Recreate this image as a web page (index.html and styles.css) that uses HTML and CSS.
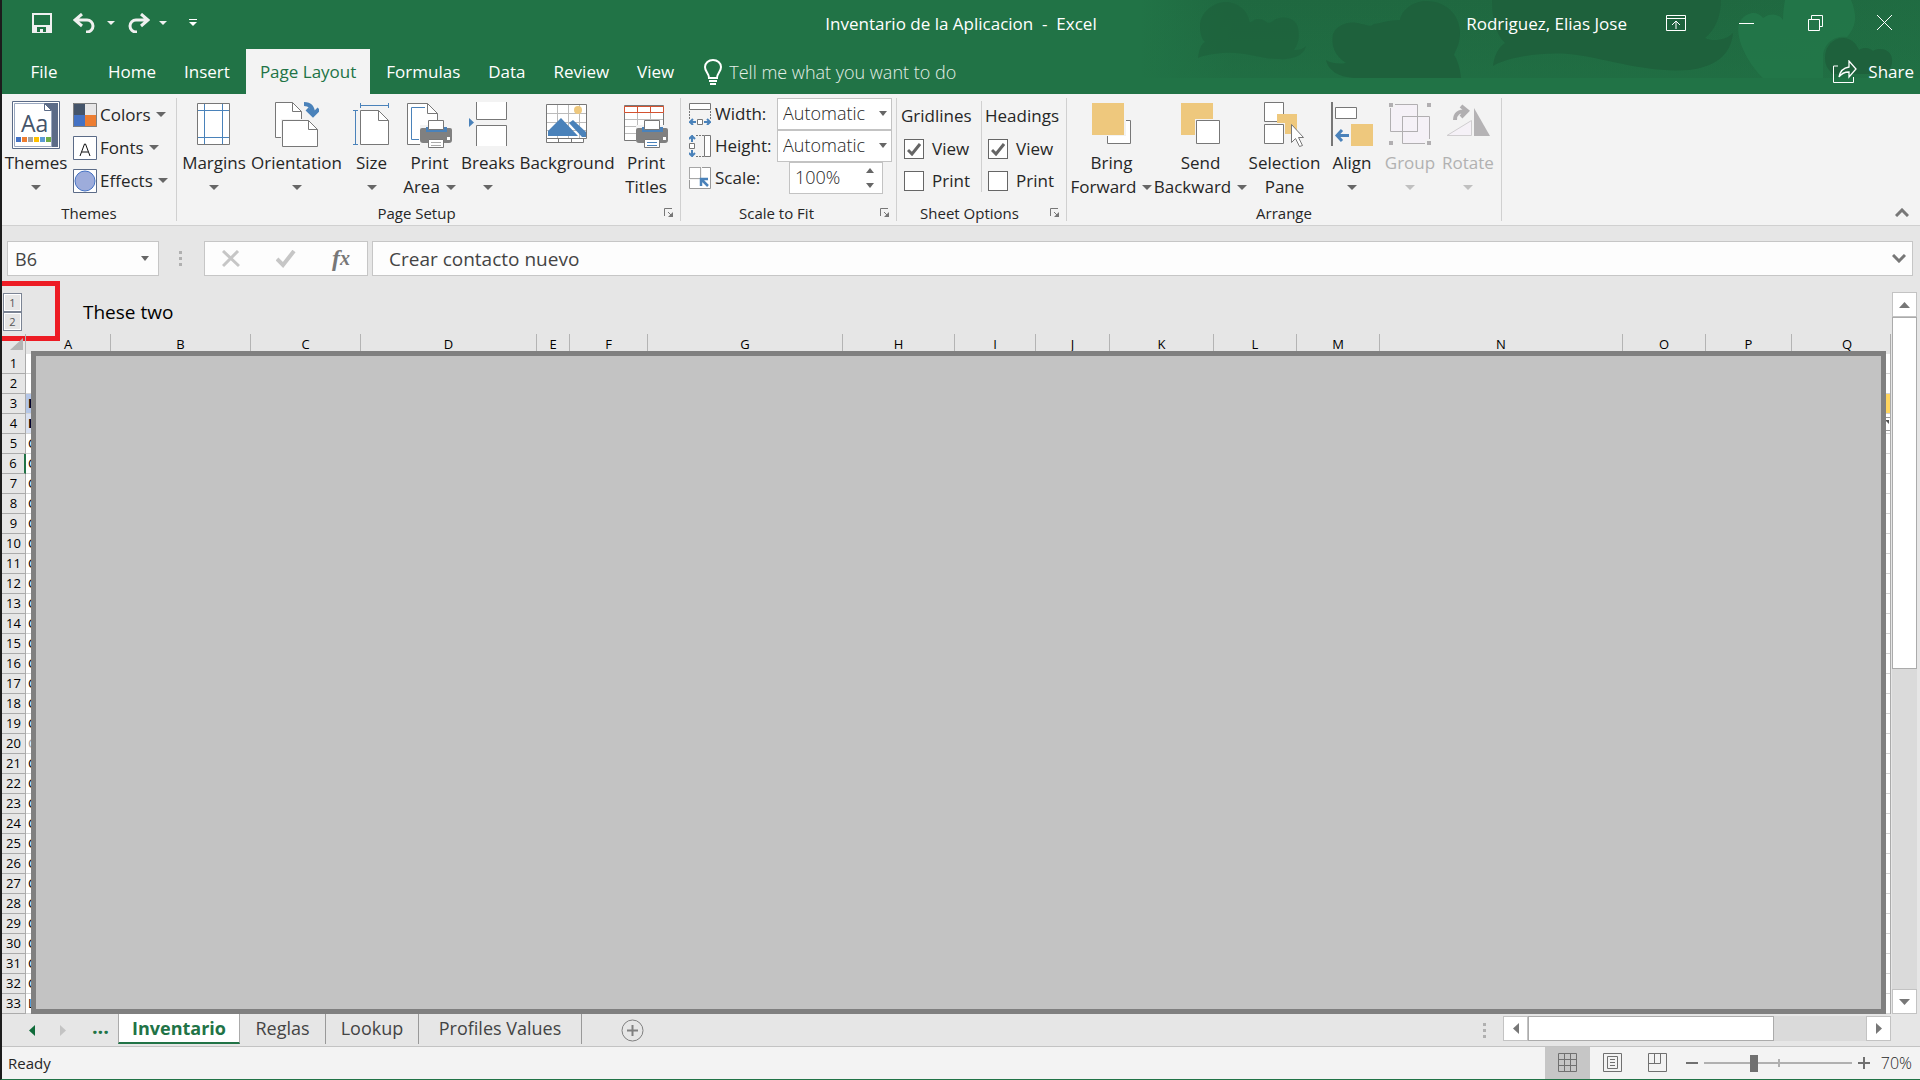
FILE: index.html
```html
<!DOCTYPE html>
<html lang="es">
<head>
<meta charset="UTF-8">
<title>Inventario de la Aplicacion - Excel</title>
<link rel="stylesheet" href="styles.css">
</head>
<body>

<header class="top">
  <svg class="art" width="780" height="78" viewBox="0 0 780 78" aria-hidden="true">
    <defs>
      <linearGradient id="haze" x1="0" x2="1" y1="0" y2="0">
        <stop offset="0" stop-color="#1e613c" stop-opacity="0"/>
        <stop offset=".12" stop-color="#1e613c" stop-opacity=".6"/>
        <stop offset=".75" stop-color="#1e613c" stop-opacity=".6"/>
        <stop offset="1" stop-color="#1e613c" stop-opacity=".4"/>
      </linearGradient>
      <linearGradient id="down" x1="0" x2="0" y1="0" y2="1">
        <stop offset="0" stop-color="#217346" stop-opacity="0"/>
        <stop offset="1" stop-color="#217346" stop-opacity=".5"/>
      </linearGradient>
    </defs>
    <rect width="780" height="78" fill="url(#haze)"/>
    <rect width="780" height="78" fill="url(#down)"/>
    <g fill="#1e613c">
      <path opacity=".7" d="M60 26C60 12 74 2 86 2c12 0 22 10 23 18 0 2 2 3 4 1 3-3 9-2 12 0 3 3 6 2 9-1 8-5 22-3 24 8 2 10 0 16-4 22 6 0 9-1 12-4-2 10-14 14-28 13-18 0-34-8-56-6-12 1-20 3-24 5 1-8 3-14 7-16-4-4-5-10-5-16z"/>
      <path d="M193 34c4-10 18-14 28-10 6 0 8 4 13 0 8-1 14-4 26-4C262 8 276 1 286 1c22 0 34 16 34 32 0 12-5 18-6 22 3 4 6 12 7 23H214c-16-1-26-8-28-18 6 4 14 4 20 3-12-8-15-18-13-29z"/>
      <path d="M352 0h229c0 16-6 30-16 38 8 4 22 2 28-5-2 22-18 34-44 37-46 3-82-12-120-16-34-2-62 4-76 12 1-10 5-18 12-23-10-10-13-26-13-43z"/>
    </g>
    <path fill="#23784a" opacity=".8" d="M645 0h66c6 14 6 26-4 37-14-2-24 8-24 20v21h-60c-20-20-30-48-22-58 8-10 18-8 22-2 8-6 16-4 20 2 0-8 1-14 2-20z"/>
    <path fill="#1e613c" d="M685 58c0-12 8-20 18-20 8 0 13 5 16 12 6-4 12-1 14 1 6-4 18-2 19 8 1 8-4 13-8 15h-52c-2-4-7-6-7-16z"/>
  </svg>

  <div class="titlebar">
    <div class="quick">
      <button class="ico" aria-label="Save"><svg width="20" height="20"><path d="M1 1h18v18H1z" fill="none" stroke="#f0f0f0" stroke-width="2"/><path d="M1 12h18v7H1z" fill="#f0f0f0"/><path d="M5 14h9v5h-3v-3H8v3H5z" fill="#217346"/></svg></button>
      <button class="ico undo" aria-label="Undo"><svg width="23" height="20"><path d="M9 1 2 7l7 6M3 7h11a6 6 0 0 1 0 12h-1" fill="none" stroke="#f0f0f0" stroke-width="3"/></svg></button>
      <i class="arr light"></i>
      <button class="ico redo" aria-label="Redo"><svg width="23" height="20"><path d="m14 1 7 6-7 6M20 7H9a6 6 0 0 0 0 12h1" fill="none" stroke="#f0f0f0" stroke-width="3"/></svg></button>
      <i class="arr light"></i>
      <button class="ico custom" aria-label="Customize"><svg width="8" height="8"><path d="M0 .5h8" stroke="#fff"/><path d="M0 3h8L4 7z" fill="#fff"/></svg></button>
    </div>
    <div class="doc">Inventario de la Aplicacion&nbsp; -&nbsp; Excel</div>
    <div class="win">
      <span>Rodriguez, Elias Jose</span>
      <button class="ico" aria-label="Ribbon Display Options"><svg width="20" height="16"><path d="M.5.5h19v15H.5zM0 3.500h20M10 14V6M6 10l4-4 4 4" fill="none" stroke="#fff"/></svg></button>
      <button class="ico" aria-label="Minimize"><svg width="16" height="16"><path d="M0 8.500h15" stroke="#fff"/></svg></button>
      <button class="ico" aria-label="Restore"><svg width="16" height="16"><path d="M.5 4.500h11v11H.5zM3.500 4V.5h11v11H12" fill="none" stroke="#fff"/></svg></button>
      <button class="ico" aria-label="Close"><svg width="16" height="16"><path d="m0 0 15 15M15 0 0 15" stroke="#fff"/></svg></button>
    </div>
  </div>

  <nav class="tabs">
    <button class="file">File</button>
    <button>Home</button>
    <button>Insert</button>
    <button class="on">Page Layout</button>
    <button>Formulas</button>
    <button>Data</button>
    <button>Review</button>
    <button>View</button>
    <label class="tell">
      <svg width="18" height="26"><path d="M5 19c0-5-4-6-4-11a8 7 0 0 1 16 0c0 5-4 6-4 11zM5 22h8M6 25h6" fill="none" stroke="#fff" stroke-width="2"/></svg>
      <input type="text" placeholder="Tell me what you want to do" aria-label="Tell me what you want to do">
    </label>
    <button class="share"><svg width="25" height="24"><path d="M5 6H.5v16.500h20V17" fill="none" stroke="#fff"/><path d="M6 17c1-6 4-9 10-10V1l7 8-7 8v-5c-5 0-8 2-10 5z" fill="none" stroke="#fff" stroke-width="1.300"/></svg>Share</button>
  </nav>
</header>

<section class="ribbon">

  <div class="group themes">
    <div class="tools">
      <button class="big"><span class="pic"><svg width="48" height="48"><path d="M.5.5h47v47H.5z" fill="#fff" stroke="#5b6b87"/><path d="M32 2h14v44H3v-1h37V10z" fill="#5b6b87"/><path d="M2.500 45.500v-43h30l7 7v36z" fill="#fff" stroke="#9aa8bf"/><path d="M32.500 2.500v7h7z" fill="#fff" stroke="#5b6b87"/><text x="9" y="31" class="aa">Aa</text><path d="M4 36h5v5H4z" fill="#4472c4"/><path d="M10 36h5v5h-5z" fill="#ed7d31"/><path d="M16 36h5v5h-5z" fill="#a5a5a5"/><path d="M22 36h5v5h-5z" fill="#ffc000"/><path d="M28 36h5v5h-5z" fill="#5b9bd5"/><path d="M34 36h5v5h-5z" fill="#70ad47"/></svg></span>Themes<span class="sub"><i class="arr"></i></span></button>
      <div class="stack">
        <button><svg width="24" height="24"><path d="M0 0h12v12H0z" fill="#44546a"/><path d="M12 0h12v12H12z" fill="#e7e6e6"/><path d="M0 12h12v12H0z" fill="#4472c4"/><path d="M12 12h12v12H12z" fill="#ed7d31"/><path d="M.5.5h23v23H.5z" fill="none" stroke="#808080"/></svg>Colors<i class="arr"></i></button>
        <button><svg width="24" height="24"><path d="M.5.5h23v23H.5z" fill="#fff" stroke="#5b6b87"/><path d="m7 20 4.500-12h1L17 20M9 16h6" fill="none" stroke="#111"/></svg>Fonts<i class="arr"></i></button>
        <button><svg width="24" height="24"><path d="M.5.5h23v23H.5z" fill="#fff" stroke="#5b6b87"/><circle cx="12" cy="12" r="10" fill="#9dacdb" stroke="#4472c4"/></svg>Effects<i class="arr"></i></button>
      </div>
    </div>
    <div class="cap"><span>Themes</span></div>
  </div>

  <div class="group setup">
    <div class="tools">
      <button class="big"><span class="pic"><svg width="34" height="44"><path d="M.5 1.500h32v41H.5z" fill="#fff" stroke="#777"/><path d="M7.500 2v40M25.500 2v40M1 8.500h31M1 35.500h31" stroke="#4a82ba" fill="none"/></svg></span>Margins<span class="sub"><i class="arr"></i></span></button>
      <button class="big"><span class="pic"><svg width="44" height="46"><path d="M.5.5h17l9 9v26H.5z" fill="#fff" stroke="#777"/><path d="M17.500.5v9h9" fill="none" stroke="#777"/><path d="M6 17h29l9 9v20H6z" fill="#f3f3f3"/><path d="M7.500 18.500h26l9 9v17h-35z" fill="#fff" stroke="#777"/><path d="M33.500 18.500v9h9" fill="none" stroke="#777"/><path d="M29 2c6 0 9 3 9 10M32 7l6 6 6-6" fill="none" stroke="#4a82ba" stroke-width="4"/></svg></span>Orientation<span class="sub"><i class="arr"></i></span></button>
      <button class="big"><span class="pic"><svg width="37" height="44"><path d="M7.500 8.500h18l10 10v24h-28z" fill="#fff" stroke="#777"/><path d="M25.500 8.500v10h10" fill="none" stroke="#777"/><path d="M7.500 1v5M35.500 1v5M8 3.500h27M0 8.500h5M0 42.500h5M2.500 9v33" fill="none" stroke="#4a82ba"/></svg></span>Size<span class="sub"><i class="arr"></i></span></button>
      <button class="big"><span class="pic"><svg width="46" height="46"><path d="M.5 1.500h20l10 10v31H.5z" fill="#fff" stroke="#777"/><path d="M20.500 1.500v10h10" fill="none" stroke="#777"/><path d="M18 5.500H4.500v32H12" fill="none" stroke="#4a82ba"/><g transform="translate(13 18)"><path d="M0 5h32v20H0z" fill="#f3f3f3"/><path d="M2 8h28q2 0 2 2v10q0 3-3 3H3q-3 0-3-3V10q0-2 2-2z" fill="#808080"/><path d="M6 7h21v5H6z" fill="#4a82ba"/><path d="M8.500.5h15v9h-15zM8.500 19.500h15v8h-15z" fill="#fff" stroke="#777"/><path d="M11 22.500h10M11 25.500h10" stroke="#aaa"/><path d="M27 17h3v3h-3z" fill="#fff"/></g></svg></span>Print<span class="sub">Area <i class="arr"></i></span></button>
      <button class="big"><span class="pic"><svg width="39" height="44"><path d="M7.500 0v17.500h30V0M7.500 44V23.500h30V44" fill="#fff" stroke="#777"/><path d="M0 16v9l5-4.500z" fill="#4a82ba"/></svg></span>Breaks<span class="sub"><i class="arr"></i></span></button>
      <button class="big"><span class="pic"><svg width="42" height="42"><path d="M.5 36.500h37v4H.5zM12.500 36v5M25.500 36v5" fill="#fff" stroke="#777"/><path d="M.5 2.500h40v34H.5z" fill="#fff" stroke="#777"/><path d="M11.500 3v33M22.500 3v33M33.500 3v33M1 11.500h39M1 20.500h39M1 28.500h39" stroke="#bbb"/><circle cx="32" cy="8" r="4" fill="#eec87d"/><path d="M2 29 15 16l17 18H2z" fill="#4a82ba"/><path d="m23 21 4-3 13 12v5h-4z" fill="#4a82ba"/></svg></span>Background</button>
      <button class="big"><span class="pic"><svg width="46" height="46"><path d="M1.500 3.500h39v35h-39z" fill="#fff" stroke="#777"/><path d="M2 17.500h38M2 24.500h38M2 31.500h38M14.500 11v27M27.500 11v27" stroke="#bbb"/><path d="M1.500 4.500h39v6h-39zM14.500 4v7M27.500 4v7" fill="#fff" stroke="#d35230"/><g transform="translate(13 18)"><path d="M0 5h32v20H0z" fill="#f3f3f3"/><path d="M2 8h28q2 0 2 2v10q0 3-3 3H3q-3 0-3-3V10q0-2 2-2z" fill="#808080"/><path d="M6 7h21v5H6z" fill="#4a82ba"/><path d="M8.500.5h15v9h-15zM8.500 19.500h15v8h-15z" fill="#fff" stroke="#777"/><path d="M11 22.500h10M11 25.500h10" stroke="#4a82ba"/><path d="M27 17h3v3h-3z" fill="#fff"/></g></svg></span>Print<span class="sub">Titles</span></button>
    </div>
    <div class="cap"><span>Page Setup</span><button class="launch" aria-label="Page Setup dialog"><svg width="10" height="10"><path d="M.5 8V.5H8M4 4l4 4" fill="none" stroke="#777"/><path d="M9 4v5H4z" fill="#777"/></svg></button></div>
  </div>

  <div class="group scale">
    <div class="rows">
      <div class="line"><svg width="22" height="22"><path d="M.5.5h21v6H.5z" fill="#fff" stroke="#777"/><path d="M.5 8v9M21.500 8v9" stroke="#777" stroke-dasharray="2 1"/><path d="M8.500 16.500h5v5h-5z" fill="#fff" stroke="#777"/><path d="M7 19H1l3-3M1 19l3 3M15 19h6l-3-3M21 19l-3 3" fill="none" stroke="#4a82ba" stroke-width="2"/></svg><label for="w">Width:</label><select id="w"><option>Automatic</option></select></div>
      <div class="line"><svg width="22" height="22"><path d="M15.500.5h6v21h-6z" fill="#fff" stroke="#777"/><path d="M7 .5h8M7 21.500h8" stroke="#777" stroke-dasharray="2 1"/><path d="M.5 8.500h5v5h-5z" fill="#fff" stroke="#777"/><path d="M3 7V1L0 4M3 1l3 3M3 15v6l-3-3M3 21l3-3" fill="none" stroke="#4a82ba" stroke-width="2"/></svg><label for="h">Height:</label><select id="h"><option>Automatic</option></select></div>
      <div class="line"><svg width="22" height="22"><path d="M.5.5h21v21H.5z" fill="#fff" stroke="#999"/><path d="M0 0h13v13H0z" fill="#f3f3f3"/><path d="M.5.5h11v11H.5z" fill="#fff" stroke="#555" stroke-dasharray="1 1"/><path d="m19 19-6-6M12 19v-7h7" fill="none" stroke="#4a82ba" stroke-width="2.500"/></svg><label for="s">Scale:</label><span class="spin"><input id="s" type="text" value="100%"><span class="updown"><button aria-label="Increase"><i class="arr up"></i></button><button aria-label="Decrease"><i class="arr"></i></button></span></span></div>
    </div>
    <div class="cap"><span>Scale to Fit</span><button class="launch" aria-label="Scale dialog"><svg width="10" height="10"><path d="M.5 8V.5H8M4 4l4 4" fill="none" stroke="#777"/><path d="M9 4v5H4z" fill="#777"/></svg></button></div>
  </div>

  <div class="group options">
    <div class="checks">
      <div class="col"><span>Gridlines</span><label><input type="checkbox" checked>View</label><label><input type="checkbox">Print</label></div>
      <div class="col"><span>Headings</span><label><input type="checkbox" checked>View</label><label><input type="checkbox">Print</label></div>
    </div>
    <div class="cap"><span>Sheet Options</span><button class="launch" aria-label="Sheet dialog"><svg width="10" height="10"><path d="M.5 8V.5H8M4 4l4 4" fill="none" stroke="#777"/><path d="M9 4v5H4z" fill="#777"/></svg></button></div>
  </div>

  <div class="group arrange">
    <div class="tools">
      <button class="big"><span class="pic"><svg width="40" height="44"><path d="M15.500 18.500h23v23h-23z" fill="#fff" stroke="#777"/><path d="M0 0h34v34H0z" fill="#f3f3f3"/><path d="M0 1h32v32H0z" fill="#eec87d"/></svg></span>Bring<span class="sub">Forward <i class="arr"></i></span></button>
      <button class="big"><span class="pic"><svg width="40" height="44"><path d="M0 1h32v32H0z" fill="#eec87d"/><path d="M14 17h26v26H14z" fill="#f3f3f3"/><path d="M15.500 18.500h23v23h-23z" fill="#fff" stroke="#777"/></svg></span>Send<span class="sub">Backward <i class="arr"></i></span></button>
      <button class="big"><span class="pic"><svg width="42" height="46"><path d="M.5.5h19v19H.5zM.5 22.500h19v19H.5z" fill="#fff" stroke="#777"/><path d="M13 12h20v20H21V21h-8z" fill="#eec87d"/><path d="M27.500 22.500v18l4-4 4 8 3-1-4-8h5z" fill="#fff" stroke="#777"/></svg></span>Selection<span class="sub">Pane</span></button>
      <button class="big"><span class="pic"><svg width="42" height="44"><path d="M1 0v44" stroke="#777" stroke-width="2"/><path d="M4.500 5.500h21v11h-21z" fill="#fff" stroke="#777"/><path d="M20 22h22v22H20z" fill="#eec87d"/><path d="M18 33.500H6M11 28l-5 5.500 5 5.500" fill="none" stroke="#4a82ba" stroke-width="3"/></svg></span>Align<span class="sub"><i class="arr"></i></span></button>
      <button class="big" disabled><span class="pic"><svg width="42" height="44"><path d="M1.500 2.500h27v27h-27zM13.500 14.500h27v27h-27z" fill="#f5f1f7" stroke="#b1afb1"/><path d="M13.500 29.500v-15h15v15z" fill="none" stroke="#b1afb1"/><path d="M0 0h6v6H0zM36 0h6v6h-6zM0 37h6v6H0zM36 37h6v6h-6z" fill="#f3f3f3"/><path d="M0 1h4v4H0zM38 1h4v4h-4zM0 39h4v4H0zM38 39h4v4h-4z" fill="#b1afb1"/></svg></span>Group<span class="sub"><i class="arr"></i></span></button>
      <button class="big" disabled><span class="pic"><svg width="44" height="44"><path d="M1 33.500h24.500v-15z" fill="#f5f1f7" stroke="#d0ced0"/><path d="M28 6v28h16z" fill="#b5b3b5"/><path d="M9 18c0-7 4-9 12-9M15 4l6 5-6 6" fill="none" stroke="#b1afb1" stroke-width="4"/></svg></span>Rotate<span class="sub"><i class="arr"></i></span></button>
    </div>
    <div class="cap"><span>Arrange</span></div>
  </div>

  <button class="ico collapse" aria-label="Collapse the Ribbon"><svg width="14" height="9"><path d="m1 8 6-6 6 6" fill="none" stroke="#777" stroke-width="3"/></svg></button>
</section>

<section class="formula">
  <div class="box name"><input type="text" value="B6" aria-label="Name Box"><i class="arr"></i></div>
  <div class="dots"><i></i><i></i><i></i></div>
  <div class="box fx">
    <button class="ico" aria-label="Cancel"><svg width="18" height="18"><path d="m1 1 16 15M16 1 1 16" stroke="#c6c6c6" stroke-width="3"/></svg></button>
    <button class="ico" aria-label="Enter"><svg width="20" height="18"><path d="m1 9 6 6L18 1" fill="none" stroke="#c6c6c6" stroke-width="4"/></svg></button>
    <button class="ico fn" aria-label="Insert Function">f<small>x</small></button>
  </div>
  <div class="box text"><input type="text" value="Crear contacto nuevo" aria-label="Formula Bar"><svg width="14" height="9"><path d="m1 1 6 6 6-6" fill="none" stroke="#777" stroke-width="3"/></svg></div>
</section>

<main class="work">
  <div class="mark"></div>
  <div class="sheet">
    <div class="outline">
      <div class="levels"><button>1</button><button>2</button></div>
      <span class="note">These two</span>
    </div>
    <div class="grid">
      <table>
        <colgroup><col class="c0"><col class="cA"><col class="cB"><col class="cC"><col class="cD"><col class="cE"><col class="cF"><col class="cG"><col class="cH"><col class="cI"><col class="cJ"><col class="cK"><col class="cL"><col class="cM"><col class="cN"><col class="cO"><col class="cP"><col class="cQ"></colgroup>
        <thead>
          <tr><th class="corner"><svg width="13" height="12"><path d="M13 0v12H0z" fill="#b4b4b4"/></svg></th><th>A</th><th>B</th><th>C</th><th>D</th><th>E</th><th>F</th><th>G</th><th>H</th><th>I</th><th>J</th><th>K</th><th>L</th><th>M</th><th>N</th><th>O</th><th>P</th><th>Q</th></tr>
        </thead>
        <tbody>
          <tr><th>1</th><td></td><td colspan="16"></td></tr>
          <tr><th>2</th><td></td><td colspan="16"></td></tr>
          <tr class="head1"><th>3</th><td>I</td><td colspan="16"></td></tr>
          <tr class="head2"><th>4</th><td>I</td><td colspan="16"><svg width="5" height="14"><path d="M0 .5h5M0 13.500h5" stroke="#999"/><path d="M0 3h4v4z" fill="#555"/></svg></td></tr>
          <tr><th>5</th><td>C</td><td colspan="16"></td></tr>
          <tr class="cur"><th>6</th><td>C</td><td colspan="16"></td></tr>
          <tr><th>7</th><td>C</td><td colspan="16"></td></tr>
          <tr><th>8</th><td>C</td><td colspan="16"></td></tr>
          <tr><th>9</th><td>C</td><td colspan="16"></td></tr>
          <tr><th>10</th><td>C</td><td colspan="16"></td></tr>
          <tr><th>11</th><td>C</td><td colspan="16"></td></tr>
          <tr><th>12</th><td>C</td><td colspan="16"></td></tr>
          <tr><th>13</th><td>C</td><td colspan="16"></td></tr>
          <tr><th>14</th><td>C</td><td colspan="16"></td></tr>
          <tr><th>15</th><td>C</td><td colspan="16"></td></tr>
          <tr><th>16</th><td>C</td><td colspan="16"></td></tr>
          <tr><th>17</th><td>C</td><td colspan="16"></td></tr>
          <tr><th>18</th><td>C</td><td colspan="16"></td></tr>
          <tr><th>19</th><td>C</td><td colspan="16"></td></tr>
          <tr class="dim"><th>20</th><td>C</td><td colspan="16"></td></tr>
          <tr><th>21</th><td>C</td><td colspan="16"></td></tr>
          <tr><th>22</th><td>C</td><td colspan="16"></td></tr>
          <tr><th>23</th><td>C</td><td colspan="16"></td></tr>
          <tr><th>24</th><td>C</td><td colspan="16"></td></tr>
          <tr><th>25</th><td>C</td><td colspan="16"></td></tr>
          <tr><th>26</th><td>C</td><td colspan="16"></td></tr>
          <tr><th>27</th><td>C</td><td colspan="16"></td></tr>
          <tr><th>28</th><td>C</td><td colspan="16"></td></tr>
          <tr><th>29</th><td>C</td><td colspan="16"></td></tr>
          <tr><th>30</th><td>C</td><td colspan="16"></td></tr>
          <tr><th>31</th><td>C</td><td colspan="16"></td></tr>
          <tr><th>32</th><td>C</td><td colspan="16"></td></tr>
          <tr><th>33</th><td>L</td><td colspan="16"></td></tr>
        </tbody>
      </table>
      <div class="cover"></div>
    </div>
  </div>
  <div class="vscroll">
    <button class="sb" aria-label="Scroll up"><svg width="11" height="6"><path d="M5.500 0 11 6H0z" fill="#777"/></svg></button>
    <div class="thumb"></div>
    <div class="track"></div>
    <button class="sb" aria-label="Scroll down"><svg width="11" height="6"><path d="M0 0h11L5.500 6z" fill="#777"/></svg></button>
  </div>
</main>

<section class="sheets">
  <div class="move">
    <button class="ico" aria-label="Previous sheet"><svg width="6" height="11"><path d="M6 0v11L0 5.500z" fill="#0f6b3a"/></svg></button>
    <button class="ico" aria-label="Next sheet"><svg width="6" height="11"><path d="M0 0v11l6-5.500z" fill="#c3c3c3"/></svg></button>
    <button class="ico more">...</button>
  </div>
  <button class="tab on">Inventario</button>
  <button class="tab t1">Reglas</button>
  <button class="tab t2">Lookup</button>
  <button class="tab t3">Profiles Values</button>
  <button class="ico plus" aria-label="New sheet"><svg width="23" height="23"><circle cx="11.500" cy="11.500" r="10.500" fill="none" stroke="#808080"/><path d="M6 11.500h11M11.500 6v11" stroke="#808080" stroke-width="2"/></svg></button>
  <div class="dots"><i></i><i></i><i></i></div>
  <div class="hscroll">
    <button class="sb" aria-label="Scroll left"><svg width="6" height="11"><path d="M6 0v11L0 5.500z" fill="#777"/></svg></button>
    <div class="thumb"></div>
    <div class="track"></div>
    <button class="sb" aria-label="Scroll right"><svg width="6" height="11"><path d="M0 0v11l6-5.500z" fill="#777"/></svg></button>
  </div>
</section>

<footer class="status">
  <span class="ready">Ready</span>
  <button class="mode on" aria-label="Normal"><svg width="20" height="20"><path d="M.5.5h18v18H.5zM6.500 1v17M12.500 1v17M1 6.500h17M1 12.500h17" fill="none" stroke="#707070"/></svg></button>
  <button class="mode" aria-label="Page Layout"><svg width="20" height="20"><path d="M.5.5h18v18H.5zM4.500 3.500h10v12h-10zM7 6.500h5M7 9.500h5M7 12.500h5" fill="none" stroke="#707070"/></svg></button>
  <button class="mode" aria-label="Page Break Preview"><svg width="20" height="20"><path d="M.5.5h18v18H.5zM.5 10.500h12V1M6.500 1v9" fill="none" stroke="#707070"/></svg></button>
  <button class="ico" aria-label="Zoom out"><svg width="12" height="12"><path d="M0 6h12" stroke="#707070" stroke-width="2"/></svg></button>
  <input class="zoom" type="range" min="0" max="100" value="33" aria-label="Zoom">
  <button class="ico" aria-label="Zoom in"><svg width="12" height="12"><path d="M0 6h12M6 0v12" stroke="#707070" stroke-width="2"/></svg></button>
  <span class="pct">70%</span>
</footer>

</body>
</html>
```
FILE: styles.css
```css
*
{
  box-sizing : border-box;
}

body
{
  margin : 0;
  min-height : 100vh;
  display : flex;
  flex-direction : column;
  font-family : "Open Sans", "Noto Sans", sans-serif;
  font-size : 17px;
  color : #262626;
  background : #e6e6e6;
  border-left : 2px solid #1c1c1c;
  border-bottom : 1px solid #217346;
  overflow-x : hidden;
}

button, input, select
{
  font : inherit;
  color : inherit;
  background : none;
  border : 0;
  border-radius : 0;
  margin : 0;
  padding : 0;
}

svg
{
  display : block;
  flex : none;
}

.ico
{
  display : flex;
  align-items : center;
  justify-content : center;
}

/* small drop-down triangle */
.arr
{
  display : inline-block;
  flex : none;
  border : 5px solid transparent;
  border-top-color : #666;
  border-bottom : 0;
}
.arr.up
{
  border-top : 0;
  border-bottom : 5px solid #666;
}
.arr.light
{
  border-width : 4px;
  border-bottom : 0;
  border-top-color : #f0f0f0;
}

/* title bar and tabs */
.top
{
  position : relative;
  background : #217346;
  color : #fff;
}
.art
{
  position : absolute;
  top : 0;
  right : 0;
}
.titlebar
{
  position : relative;
  display : grid;
  grid-template-columns : 1fr auto 1fr;
  align-items : center;
  height : 49px;
  padding-bottom : 3px;
}
.quick
{
  display : flex;
  align-items : center;
  padding-left : 30px;
}
.undo
{
  margin : 0 11px 0 21px;
}
.redo
{
  margin : 0 9px 0 12px;
}
.custom
{
  margin-left : 22px;
}
.win
{
  display : flex;
  align-items : center;
  justify-content : flex-end;
  gap : 53px;
  padding-right : 27px;
}
.win span
{
  margin-right : -14px;
}

.tabs
{
  position : relative;
  display : flex;
  height : 45px;
}
.tabs button
{
  padding : 0 14px;
}
.tabs .file
{
  width : 84px;
  margin-right : 8px;
}
.tabs .on
{
  margin : 0 2px;
  background : #f3f3f3;
  color : #217346;
}
.tell
{
  display : flex;
  align-items : center;
  gap : 7px;
  margin-left : 16px;
}
.tell input
{
  width : 280px;
  font-size : 18px;
  font-weight : 300;
}
.tell input::placeholder
{
  color : #e4efe8;
  opacity : 1;
}
.tabs .share
{
  display : flex;
  align-items : center;
  gap : 10px;
  margin-left : auto;
  padding : 0 6px;
}

/* ribbon */
.ribbon
{
  display : flex;
  height : 132px;
  padding-top : 4px;
  background : #f3f3f3;
  border-bottom : 1px solid #d0d0d0;
}
.group
{
  display : flex;
  flex-direction : column;
  height : 123px;
  border-right : 1px solid #d0d0d0;
}
.themes
{
  width : 175px;
}
.setup
{
  width : 504px;
}
.scale
{
  width : 216px;
}
.options
{
  width : 170px;
}
.arrange
{
  width : 435px;
}
.tools
{
  display : flex;
  flex : 1;
  align-items : flex-start;
}
.big
{
  display : flex;
  flex-direction : column;
  align-items : center;
  line-height : 24px;
}
.big:disabled
{
  color : #b1b1b1;
}
.big:disabled .arr
{
  border-top-color : #c0c0c0;
}
.pic
{
  height : 53px;
  padding-top : 3px;
}
.setup .pic, .arrange .pic
{
  padding-top : 4px;
}
.sub
{
  display : flex;
  align-items : center;
  gap : 6px;
  height : 24px;
}
.aa
{
  font-size : 23px;
  fill : #44546a;
}
.themes .big
{
  width : 68px;
}
.setup .big:nth-child(1)
{
  width : 74px;
}
.setup .big:nth-child(2)
{
  width : 91px;
}
.setup .big:nth-child(3)
{
  width : 59px;
}
.setup .big:nth-child(4)
{
  width : 57px;
}
.setup .big:nth-child(5)
{
  width : 60px;
}
.setup .big:nth-child(6)
{
  width : 98px;
}
.setup .big:nth-child(7)
{
  width : 60px;
}
.arrange .big:nth-child(1)
{
  width : 89px;
}
.arrange .big:nth-child(2)
{
  width : 89px;
}
.arrange .big:nth-child(3)
{
  width : 79px;
}
.arrange .big:nth-child(4)
{
  width : 56px;
}
.arrange .big:nth-child(5)
{
  width : 60px;
}
.arrange .big:nth-child(6)
{
  width : 56px;
}
.stack
{
  padding-left : 3px;
}
.stack button
{
  display : flex;
  align-items : center;
  gap : 3px;
  height : 33px;
}
.stack .arr
{
  margin-left : 2px;
}
.cap
{
  display : flex;
  align-items : center;
  height : 17px;
  font-size : 15px;
}
.cap span
{
  flex : 1;
  text-align : center;
}
.launch
{
  width : 24px;
  padding-left : 8px;
}

.rows
{
  flex : 1;
  padding-left : 8px;
}
.line
{
  display : flex;
  align-items : center;
  height : 32px;
}
.line label
{
  width : 66px;
  padding : 0 0 2px 4px;
}
.line select
{
  appearance : none;
  width : 115px;
  height : 32px;
  padding : 0 0 2px 5px;
  border : 1px solid #c3c3c3;
  background : #fff url("data:image/svg+xml,%3Csvg xmlns='http://www.w3.org/2000/svg' width='8' height='5'%3E%3Cpath d='M0 0h8L4 5z' fill='%23666'/%3E%3C/svg%3E") no-repeat right 4px top 12px;
  font-size : 18px;
  font-weight : 300;
}
.spin
{
  display : flex;
  width : 94px;
  height : 32px;
  margin-left : 12px;
  background : #fff;
  border : 1px solid #c3c3c3;
}
.spin input
{
  width : 69px;
  padding : 0 0 2px 5px;
  font-size : 18px;
  font-weight : 300;
}
.updown
{
  display : flex;
  flex-direction : column;
  justify-content : space-around;
}
.updown button
{
  display : flex;
  width : 22px;
  justify-content : center;
}
.updown .arr
{
  border-left-width : 4px;
  border-right-width : 4px;
}

.checks
{
  display : flex;
  flex : 1;
  padding-top : 3px;
}
.col
{
  width : 84px;
  height : 91px;
  padding-left : 4px;
  line-height : 30px;
}
.col span
{
  display : block;
  height : 32px;
}
.col + .col
{
  padding-left : 3px;
  border-left : 1px solid #d0d0d0;
}
.col label
{
  display : flex;
  align-items : center;
  gap : 8px;
  height : 32px;
  padding-left : 3px;
}
.col input
{
  appearance : none;
  width : 20px;
  height : 20px;
  background : #fff;
  border : 1px solid #666;
}
.col input:checked
{
  background : #fff url("data:image/svg+xml,%3Csvg xmlns='http://www.w3.org/2000/svg' width='14' height='13'%3E%3Cpath d='m1 7 4 4 8-10' fill='none' stroke='%23666' stroke-width='3'/%3E%3C/svg%3E") no-repeat center;
}
.collapse
{
  margin : auto 11px 8px auto;
}

/* formula bar */
.formula
{
  display : flex;
  height : 50px;
  padding : 15px 7px 0 5px;
}
.box
{
  display : flex;
  align-items : center;
  height : 35px;
  background : #fdfdfd;
  border : 1px solid #c6c6c6;
  color : #444;
}
.name
{
  width : 152px;
  padding : 0 9px 0 7px;
}
.name input
{
  flex : 1;
  min-width : 0;
  font-size : 18px;
}
.name .arr
{
  border-left-width : 4px;
  border-right-width : 4px;
}
.dots
{
  display : flex;
  flex-direction : column;
  justify-content : center;
  gap : 3px;
  width : 3px;
}
.dots i
{
  height : 3px;
  background : #b0b0b0;
}
.formula .dots
{
  margin : 0 22px 0 20px;
}
.fx
{
  width : 164px;
  padding-left : 17px;
  gap : 36px;
}
.fn
{
  font : italic bold 24px "Liberation Serif", serif;
  color : #777;
}
.fn small
{
  font-size : 20px;
}
.text
{
  flex : 1;
  margin-left : 4px;
  padding : 0 6px 0 16px;
}
.text input
{
  flex : 1;
  font-size : 19px;
}

/* sheet */
.work
{
  position : relative;
  display : flex;
  flex : 1;
}
.mark
{
  position : absolute;
  left : -2px;
  top : 5px;
  width : 60px;
  height : 60px;
  border : 5px solid #ed1c24;
  border-left-width : 2px;
}
.sheet
{
  flex : 1;
  min-width : 0;
}
.outline
{
  display : flex;
  height : 58px;
  padding-left : 1px;
}
.levels
{
  padding-top : 17px;
}
.levels button
{
  display : block;
  width : 19px;
  height : 19px;
  background : #e6e6e6;
  border : 1px solid #7b8494;
  box-shadow : inset 0 0 0 1px #fff;
  color : #555;
  font-size : 11px;
  line-height : 17px;
}
.note
{
  margin-left : 61px;
  padding-top : 20px;
  color : #000;
  font-size : 19px;
  line-height : 32px;
}
.grid
{
  position : relative;
  margin-right : 1px;
  border-right : 1px solid #ababab;
}
.grid table
{
  width : 100%;
  table-layout : fixed;
  border-collapse : separate;
  border-spacing : 0;
  color : #000;
  font-size : 13px;
}
.c0
{
  width : 24px;
}
.cA
{
  width : 85px;
}
.cB
{
  width : 140px;
}
.cC
{
  width : 110px;
}
.cD
{
  width : 176px;
}
.cE
{
  width : 33px;
}
.cF
{
  width : 78px;
}
.cG
{
  width : 195px;
}
.cH
{
  width : 112px;
}
.cI
{
  width : 81px;
}
.cJ
{
  width : 74px;
}
.cK
{
  width : 104px;
}
.cL
{
  width : 83px;
}
.cM
{
  width : 83px;
}
.cN
{
  width : 243px;
}
.cO
{
  width : 83px;
}
.cP
{
  width : 86px;
}
th, td
{
  padding : 0;
  height : 20px;
  line-height : 19px;
  white-space : nowrap;
  overflow : hidden;
}
th
{
  font-weight : normal;
}
thead th
{
  border-right : 1px solid #b4b4b4;
}
thead th:last-child
{
  border-right : 0;
  padding-left : 12px;
}
.corner svg
{
  margin-left : 8px;
}
tbody th
{
  border-right : 1px solid #ababab;
  border-bottom : 1px solid #ababab;
}
td
{
  background : #fff;
  border-bottom : 1px solid #d4d4d4;
  padding-left : 2px;
}
.head1 td
{
  background : #b4c6e7;
  font-weight : bold;
}
.head1 td:last-child
{
  background : #ffd55f;
}
.head2 td
{
  background : #d9e1f2;
  font-weight : bold;
}
.head2 td:last-child
{
  background : #fff;
}
.head2 svg
{
  margin-left : auto;
}
.cur th
{
  border-right : 2px solid #217346;
}
.dim td
{
  color : #999;
}
.cover
{
  position : absolute;
  left : 29px;
  right : 4px;
  top : 17px;
  bottom : 0;
  background : #c3c3c3;
  border : 5px solid #808080;
}

/* scroll bars */
.vscroll
{
  display : flex;
  flex-direction : column;
  width : 28px;
  padding : 16px 3px 0 0;
}
.sb
{
  display : flex;
  align-items : center;
  justify-content : center;
  flex : none;
  width : 25px;
  height : 25px;
  background : #fff;
  border : 1px solid #c3c3c3;
}
.thumb
{
  background : #fff;
  border : 1px solid #ababab;
}
.track
{
  background : #dadada;
}
.vscroll .thumb
{
  flex : 351;
}
.vscroll .track
{
  flex : 321;
}

/* sheet tabs */
.sheets
{
  display : flex;
  height : 33px;
  padding-right : 29px;
  color : #444;
  border-bottom : 1px solid #c3c3c3;
}
.move
{
  display : flex;
  align-items : center;
  width : 116px;
  padding : 0 9px 0 27px;
  justify-content : space-between;
}
.more
{
  padding-bottom : 6px;
  color : #217346;
  font-size : 20px;
  font-weight : bold;
  line-height : 24px;
}
.tab
{
  height : 30px;
  padding-bottom : 3px;
  font-size : 18px;
  line-height : 24px;
  text-align : center;
}
.tab.on
{
  width : 122px;
  padding-bottom : 1px;
  background : #fff;
  color : #217346;
  font-weight : bold;
  border : 1px solid #ababab;
  border-top : 0;
  border-bottom : 2px solid #217346;
}
.t1, .t2, .t3
{
  border-right : 1px solid #999;
}
.t1
{
  width : 86px;
}
.t2
{
  width : 93px;
}
.t3
{
  width : 163px;
}
.plus
{
  margin-left : 39px;
}
.sheets .dots
{
  margin : 0 17px 0 auto;
}
.hscroll
{
  display : flex;
  width : 388px;
  padding-top : 2px;
}
.hscroll .thumb
{
  flex : 245;
  height : 25px;
}
.hscroll .track
{
  flex : 93;
  height : 25px;
}

/* status bar */
.status
{
  display : flex;
  align-items : center;
  height : 32px;
  background : #f3f3f3;
  padding-right : 8px;
  font-size : 15px;
}
.ready
{
  margin : 0 auto 0 6px;
}
.mode
{
  display : flex;
  align-items : center;
  justify-content : center;
  width : 45px;
  height : 32px;
}
.mode.on
{
  background : #c6c6c6;
}
.mode + .ico
{
  margin-left : 6px;
}
.zoom
{
  appearance : none;
  width : 148px;
  height : 18px;
  margin : 0 6px;
  background : linear-gradient(#b0b0b0, #b0b0b0) 74px center / 2px 8px no-repeat, linear-gradient(#b0b0b0, #b0b0b0) center / 100% 2px no-repeat;
}
.zoom::-webkit-slider-thumb
{
  appearance : none;
  width : 8px;
  height : 17px;
  background : #707070;
}
.pct
{
  width : 42px;
  text-align : right;
  font-size : 16px;
  font-weight : 300;
}
```
